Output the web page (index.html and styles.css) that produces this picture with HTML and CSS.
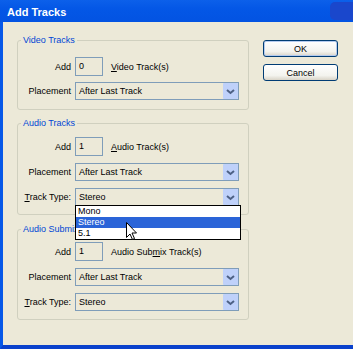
FILE: index.html
```html
<!DOCTYPE html>
<html lang="en">
<head>
  <meta charset="UTF-8">
  <title>Add Tracks</title>
  <link rel="stylesheet" href="styles.css">
</head>
<body>
<div class="window">
  <div class="titlebar">
    <span class="title">Add Tracks</span>
    <span class="title-btn"></span>
  </div>

  <div class="client">
    <div class="groups">

      <div class="group group-video">
        <span class="legend">Video Tracks</span>
        <div class="rows">
          <div class="row">
            <span class="row-label">Add</span>
            <span class="count">0</span>
            <span class="suffix"><u>V</u>ideo Track(s)</span>
          </div>
          <div class="row">
            <span class="row-label">Placement</span>
            <div class="select">
              <span>After Last Track</span>
              <span class="arrow"><svg width="15" height="16" viewBox="0 0 15 16"><path d="M4 7 L7.5 10 L11 7" fill="none" stroke="#4d6185" stroke-width="2"/></svg></span>
            </div>
          </div>
        </div>
      </div>

      <div class="group group-audio">
        <span class="legend">Audio Tracks</span>
        <div class="rows">
          <div class="row">
            <span class="row-label">Add</span>
            <span class="count">1</span>
            <span class="suffix"><u>A</u>udio Track(s)</span>
          </div>
          <div class="row">
            <span class="row-label">Placement</span>
            <div class="select">
              <span>After Last Track</span>
              <span class="arrow"><svg width="15" height="16" viewBox="0 0 15 16"><path d="M4 7 L7.5 10 L11 7" fill="none" stroke="#4d6185" stroke-width="2"/></svg></span>
            </div>
          </div>
          <div class="row">
            <span class="row-label"><u>T</u>rack Type:</span>
            <div class="select">
              <span>Stereo</span>
              <span class="arrow"><svg width="15" height="16" viewBox="0 0 15 16"><path d="M4 7 L7.5 10 L11 7" fill="none" stroke="#4d6185" stroke-width="2"/></svg></span>
              <div class="dropdown">
                <div class="option">Mono</div>
                <div class="option selected">Stereo</div>
                <div class="option">5.1</div>
                <svg class="cursor" width="12" height="19" viewBox="0 0 12 19">
                  <path d="M0.5 0.5 L0.5 15.5 L4 12 L6.5 17.5 L8.5 16.5 L6 11 L10.5 11 Z" fill="#fff" stroke="#000" stroke-width="1"/>
                </svg>
              </div>
            </div>
          </div>
        </div>
      </div>

      <div class="group group-submix">
        <span class="legend">Audio Submix Tracks</span>
        <div class="rows">
          <div class="row">
            <span class="row-label">Add</span>
            <span class="count">1</span>
            <span class="suffix">Audio Sub<u>m</u>ix Track(s)</span>
          </div>
          <div class="row">
            <span class="row-label">Placement</span>
            <div class="select">
              <span>After Last Track</span>
              <span class="arrow"><svg width="15" height="16" viewBox="0 0 15 16"><path d="M4 7 L7.5 10 L11 7" fill="none" stroke="#4d6185" stroke-width="2"/></svg></span>
            </div>
          </div>
          <div class="row">
            <span class="row-label"><u>T</u>rack Type:</span>
            <div class="select">
              <span>Stereo</span>
              <span class="arrow"><svg width="15" height="16" viewBox="0 0 15 16"><path d="M4 7 L7.5 10 L11 7" fill="none" stroke="#4d6185" stroke-width="2"/></svg></span>
            </div>
          </div>
        </div>
      </div>

    </div>

    <div class="buttons">
      <button class="btn btn-default">OK</button>
      <button class="btn">Cancel</button>
    </div>
  </div>
</div>
</body>
</html>
```

FILE: styles.css
```css
body {
  margin: 0;
  font-family: "Liberation Sans", Arial, sans-serif;
  font-size: 9px;
  color: #000;
}

.window {
  width: 353px;
  height: 349px;
  background: #ece9d8;
  display: flex;
  flex-direction: column;
  overflow: hidden;
}

.titlebar {
  height: 22px;
  flex: none;
  display: flex;
  align-items: center;
  padding-left: 7px;
  padding-top: 2px;
  box-sizing: border-box;
  background: linear-gradient(#0c60ea, #0457e6 40%, #0353e2);
  color: #fff;
  font-size: 11px;
  font-weight: bold;
}

.title-btn {
  margin-left: auto;
  width: 23px;
  height: 18px;
  margin-top: -2px;
  background: #1a47cc;
  border-radius: 5px 0 0 5px;
}

.client {
  flex: 1;
  display: flex;
  border-left: 3px solid #0758e8;
  border-bottom: 4px solid #0a41cc;
  padding-left: 14px;
}

.groups {
  width: 232px;
  display: flex;
  flex-direction: column;
}

.group {
  border: 1px solid #d0d0bf;
  border-radius: 3px;
  box-sizing: border-box;
}

.group-video { margin-top: 18px; height: 70px; }
.group-audio { margin-top: 13px; height: 92px; }
.group-submix { margin-top: 14px; height: 91px; }

.legend {
  display: block;
  width: max-content;
  height: 12px;
  line-height: 12px;
  margin: -7px 0 0 3px;
  padding: 0 2px;
  background: #ece9d8;
  color: #0046d5;
}

.rows {
  display: flex;
  flex-direction: column;
  gap: 7px;
}

.group-video .rows { margin-top: 11px; gap: 6px; }
.group-audio .rows { margin-top: 8px; }
.group-submix .rows { margin-top: 7px; }

.row {
  display: flex;
  align-items: center;
}

.row-label {
  width: 53px;
  margin-right: 4px;
  text-align: right;
}

.count {
  width: 28px;
  height: 19px;
  box-sizing: border-box;
  border: 1px solid #7f9db9;
  padding-left: 3px;
  line-height: 17px;
}

.suffix {
  margin-left: 8px;
}

.select {
  position: relative;
  width: 164px;
  height: 18px;
  box-sizing: border-box;
  border: 1px solid #7f9db9;
  display: flex;
  align-items: center;
  padding-left: 3px;
}

.arrow {
  margin-left: auto;
  width: 15px;
  height: 16px;
  background: #bfd1fa;
  border-radius: 1px;
}

.arrow svg {
  display: block;
}

.dropdown {
  position: absolute;
  top: 100%;
  left: -1px;
  width: 166px;
  box-sizing: border-box;
  border: 1px solid #000;
  background: #fff;
  z-index: 2;
}

.option {
  height: 11px;
  line-height: 11px;
  padding-left: 2px;
}

.option.selected {
  background: #2a64d8;
  color: #fff;
}

.cursor {
  position: absolute;
  left: 50px;
  top: 16px;
}

.buttons {
  margin-left: 14px;
  margin-top: 18px;
  display: flex;
  flex-direction: column;
  gap: 7px;
}

.btn {
  width: 75px;
  height: 17px;
  box-sizing: border-box;
  padding: 0;
  border: 1px solid #003c74;
  border-radius: 3px;
  background: linear-gradient(#fff, #f3f3ee 70%, #d9d4c8);
  font: inherit;
  color: #000;
  text-align: center;
}

.btn-default {
  box-shadow: inset 0 0 0 1px #b5cbef;
}
```
